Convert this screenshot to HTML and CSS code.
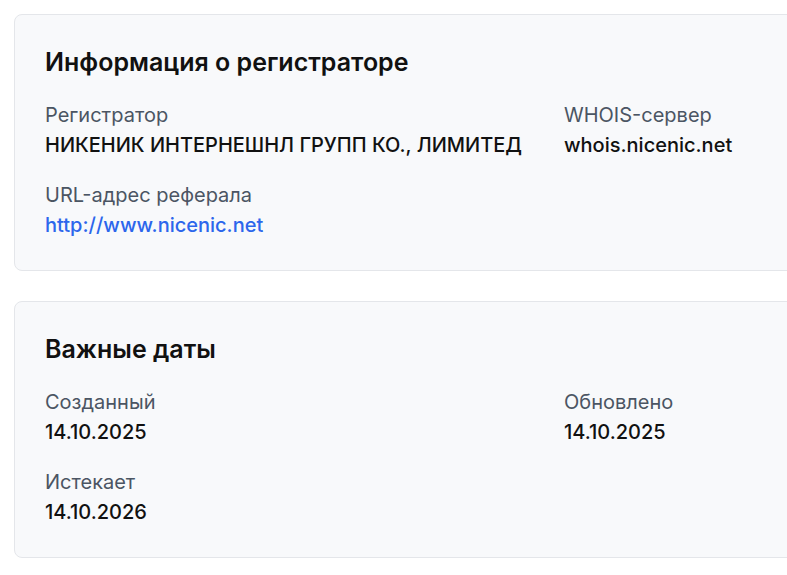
FILE: index.html
```html
<!DOCTYPE html>
<html lang="ru">
<head>
<meta charset="utf-8">
<link rel="stylesheet" href="styles.css">
</head>
<body>
<main class="page">
  <section class="card">
    <h2 class="card-title">Информация о регистраторе</h2>
    <div class="fields">
      <div class="field">
        <div class="label">Регистратор</div>
        <div class="value">НИКЕНИК ИНТЕРНЕШНЛ ГРУПП КО., ЛИМИТЕД</div>
      </div>
      <div class="field">
        <div class="label">WHOIS-сервер</div>
        <div class="value">whois.nicenic.net</div>
      </div>
      <div class="field">
        <div class="label">URL-адрес реферала</div>
        <div class="value"><a class="link" href="#">http://www.nicenic.net</a></div>
      </div>
    </div>
  </section>
  <section class="card">
    <h2 class="card-title">Важные даты</h2>
    <div class="fields">
      <div class="field">
        <div class="label">Созданный</div>
        <div class="value">14.10.2025</div>
      </div>
      <div class="field">
        <div class="label">Обновлено</div>
        <div class="value">14.10.2025</div>
      </div>
      <div class="field">
        <div class="label">Истекает</div>
        <div class="value">14.10.2026</div>
      </div>
    </div>
  </section>
</main>
</body>
</html>
```
FILE: styles.css
```css
html, body {
  margin: 0;
  padding: 0;
  background: #ffffff;
  overflow: hidden;
}
body {
  font-family: Inter, "Noto Sans", sans-serif;
  color: #111111;
}
.page {
  display: flex;
  flex-direction: column;
  gap: 30px;
  padding: 14px 0 0 14px;
  width: 1076px;
}
.card {
  background: #f8f9fb;
  border: 1px solid #e4e6ea;
  border-radius: 8px;
  padding: 31px 30px 31px 30px;
}
.card-title {
  margin: 0 0 23px 0;
  font-size: 25px;
  line-height: 32px;
  font-weight: 600;
  color: #111111;
}
.fields {
  display: grid;
  grid-template-columns: 1fr 1fr;
  column-gap: 24px;
  row-gap: 22px;
}
.label {
  font-size: 20px;
  line-height: 28px;
  color: #4b5563;
  margin-bottom: 2px;
}
.value {
  font-size: 20px;
  line-height: 28px;
  font-weight: 500;
  color: #111111;
}
.link {
  color: #2c66ec;
  text-decoration: none;
  font-weight: 500;
}
```
